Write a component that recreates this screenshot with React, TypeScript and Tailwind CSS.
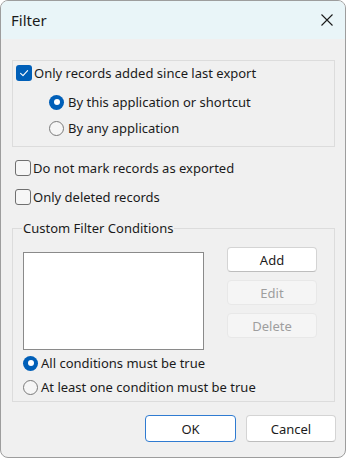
import React from "react";

function Check({ checked }: { checked?: boolean }) {
  if (checked) {
    return (
      <span className="w-[16px] h-[16px] rounded-[3px] bg-[#005fb8] flex items-center justify-center shrink-0">
        <svg width="10" height="10" viewBox="0 0 10 10">
          <path d="M1.6 5.3 L4 7.6 L8.6 2.6" stroke="white" strokeWidth="1.1" fill="none" strokeLinecap="round" strokeLinejoin="round" />
        </svg>
      </span>
    );
  }
  return <span className="w-[16px] h-[16px] rounded-[3px] border border-[#6f6f6f] bg-[#f6f6f6] shrink-0" />;
}

function Radio({ checked }: { checked?: boolean }) {
  if (checked) {
    return (
      <span className="w-[15px] h-[15px] rounded-full bg-[#005fb8] flex items-center justify-center shrink-0">
        <span className="w-[6px] h-[6px] rounded-full bg-white" />
      </span>
    );
  }
  return <span className="w-[15px] h-[15px] rounded-full border border-[#7a7a7a] bg-[#f6f6f6] shrink-0" />;
}

export default function App() {
  return (
    <div className="w-[346px] h-[459px] bg-white font-['Segoe_UI','Noto_Sans',sans-serif] text-[#1b1b1b]">
      <div className="w-[346px] h-[458px] border border-[#9d9d9d] rounded-[8px] overflow-hidden bg-[#f0f0f0] flex flex-col">
        <div className="h-[38px] shrink-0 bg-[#e9f5f8] flex items-center pl-[10px]">
          <span className="text-[15px] leading-none">Filter</span>
          <svg className="ml-[274px]" width="12" height="12" viewBox="0 0 12 12">
            <path d="M0.5 0.5 L11.5 11.5 M11.5 0.5 L0.5 11.5" stroke="#1b1b1b" strokeWidth="1.1" />
          </svg>
        </div>
        <div className="flex flex-col pl-[11px] text-[13px] leading-[16px]">
          <div className="mt-[21px] w-[323px] h-[87px] border border-[#dcdcdc] flex flex-col">
            <div className="mt-[4px] ml-[3px] h-[16px] flex items-center gap-[2px]">
              <Check checked />
              <span>Only records added since last export</span>
            </div>
            <div className="mt-[13px] ml-[36px] h-[16px] flex items-center gap-[4px]">
              <Radio checked />
              <span>By this application or shortcut</span>
            </div>
            <div className="mt-[10px] ml-[36px] h-[16px] flex items-center gap-[4px]">
              <Radio />
              <span>By any application</span>
            </div>
          </div>
          <div className="mt-[13px] ml-[3px] h-[16px] flex items-center gap-[2px]">
            <Check />
            <span>Do not mark records as exported</span>
          </div>
          <div className="mt-[13px] ml-[3px] h-[16px] flex items-center gap-[2px]">
            <Check />
            <span>Only deleted records</span>
          </div>
          <fieldset className="mt-[14px] w-[323px] border border-[#dcdcdc] pb-[6px]">
            <legend className="ml-[9px] px-[1px] leading-[18px]">Custom Filter Conditions</legend>
            <div className="mt-[10px] flex items-start">
              <div className="mt-[5px] ml-[10px] w-[181px] h-[98px] bg-white border border-[#8a8a8a]" />
              <div className="ml-[23px] w-[90px] flex flex-col gap-[8px]">
                <button className="h-[25px] rounded-[4px] bg-white border border-[#d4d4d4] border-b-[#bdbdbd] text-[#1b1b1b]">Add</button>
                <button className="h-[25px] rounded-[4px] bg-[#f5f5f5] border border-[#e8e8e8] text-[#9e9e9e]">Edit</button>
                <button className="h-[25px] rounded-[4px] bg-[#f5f5f5] border border-[#e8e8e8] text-[#9e9e9e]">Delete</button>
              </div>
            </div>
            <div className="mt-[5px] ml-[10px] h-[16px] flex items-center gap-[3px]">
              <Radio checked />
              <span>All conditions must be true</span>
            </div>
            <div className="mt-[8px] ml-[10px] h-[16px] flex items-center gap-[3px]">
              <Radio />
              <span>At least one condition must be true</span>
            </div>
          </fieldset>
          <div className="mt-[13px] ml-[133px] flex gap-[10px]">
            <button className="w-[91px] h-[27px] rounded-[4px] bg-white border border-[#2f7bd1]">OK</button>
            <button className="w-[90px] h-[27px] rounded-[4px] bg-white border border-[#d4d4d4] border-b-[#bdbdbd]">Cancel</button>
          </div>
        </div>
      </div>
    </div>
  );
}
